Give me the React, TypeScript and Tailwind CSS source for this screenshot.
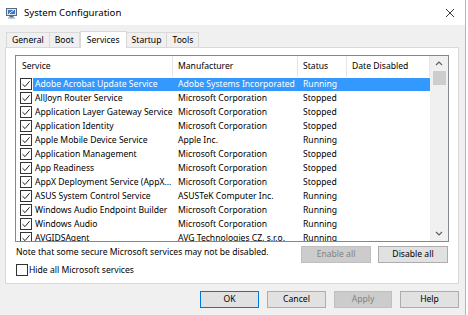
import React from 'react';

const ROWS: [string, string, string][] = [
  ['Adobe Acrobat Update Service', 'Adobe Systems Incorporated', 'Running'],
  ['AllJoyn Router Service', 'Microsoft Corporation', 'Stopped'],
  ['Application Layer Gateway Service', 'Microsoft Corporation', 'Stopped'],
  ['Application Identity', 'Microsoft Corporation', 'Stopped'],
  ['Apple Mobile Device Service', 'Apple Inc.', 'Running'],
  ['Application Management', 'Microsoft Corporation', 'Stopped'],
  ['App Readiness', 'Microsoft Corporation', 'Stopped'],
  ['AppX Deployment Service (AppX...', 'Microsoft Corporation', 'Stopped'],
  ['ASUS System Control Service', 'ASUSTeK Computer Inc.', 'Running'],
  ['Windows Audio Endpoint Builder', 'Microsoft Corporation', 'Running'],
  ['Windows Audio', 'Microsoft Corporation', 'Running'],
  ['AVGIDSAgent', 'AVG Technologies CZ, s.r.o.', 'Running'],
];

const TABS = ['General', 'Boot', 'Services', 'Startup', 'Tools'];

function CheckBox({ checked }: { checked: boolean }) {
  return (
    <div className="w-[12px] h-[12px] border border-[#333333] bg-white flex items-center justify-center shrink-0">
      {checked && (
        <svg width="10" height="10" viewBox="0 0 10 10">
          <path d="M1.5 5.2 L4 7.6 L8.6 2.2" fill="none" stroke="#222" strokeWidth="1" />
        </svg>
      )}
    </div>
  );
}

function Button({ label, disabled, primary, w }: { label: string; disabled?: boolean; primary?: boolean; w: string }) {
  const cls = disabled
    ? 'bg-[#cccccc] border-[#bfbfbf] text-[#838383]'
    : primary
      ? 'bg-[#e1e1e1] border-[#0078d7] text-black'
      : 'bg-[#e1e1e1] border-[#adadad] text-black';
  return (
    <div className={`${w} h-[17px] border flex items-center justify-center text-[8.6px] ${cls}`}>
      {label}
    </div>
  );
}

export default function App() {
  return (
    <div className="w-[468px] h-[315px] bg-white overflow-hidden font-['Segoe_UI','Noto_Sans',sans-serif] text-black">
      <div className="w-[466px] h-[315px] bg-[#f0f0f0] border-r border-[#b4b4b4] flex flex-col">
        {/* Title bar */}
        <div className="h-[25px] bg-white flex items-center pl-[6px] pr-[10px] shrink-0">
          <svg width="12" height="12" viewBox="0 0 12 12" className="shrink-0">
            <rect x="0.5" y="1.5" width="10" height="7" fill="#dfe6ee" stroke="#5a6a7e" />
            <rect x="2" y="3" width="7" height="4" fill="#3a78c8" />
            <path d="M3 7 L5 5 L8 3" stroke="#ffffff" strokeWidth="0.8" fill="none" />
            <rect x="3.5" y="9" width="4" height="1.5" fill="#5a6a7e" />
            <rect x="2" y="10.5" width="7" height="1" fill="#8a98a8" />
          </svg>
          <span className="ml-[6px] text-[9.6px] leading-none">System Configuration</span>
          <svg width="10" height="10" viewBox="0 0 10 10" className="ml-auto">
            <path d="M1 1 L9 9 M9 1 L1 9" stroke="#222" strokeWidth="0.9" />
          </svg>
        </div>

        {/* Tabs */}
        <div className="h-[22px] flex items-end pl-[6px] shrink-0">
          {TABS.map((t) => {
            const active = t === 'Services';
            return active ? (
              <div
                key={t}
                className="h-[17px] px-[6px] -mb-px bg-white border border-b-0 border-[#d9d9d9] flex items-center text-[8.6px] relative z-10"
              >
                {t}
              </div>
            ) : (
              <div
                key={t}
                className="h-[15px] px-[5px] bg-[#f0f0f0] border border-b-0 border-[#d9d9d9] -ml-px first:ml-0 flex items-center text-[8.6px]"
              >
                {t}
              </div>
            );
          })}
        </div>

        {/* Panel */}
        <div className="ml-[5px] w-[454px] h-[237px] bg-white border border-[#d9d9d9] pt-[7px] pl-[9px] flex flex-col shrink-0">
          {/* List */}
          <div className="w-[434px] h-[187px] border border-[#828790] flex">
            <div className="w-[414px] flex flex-col overflow-hidden">
              <div className="h-[21px] flex text-[8.6px] shrink-0">
                <div className="w-[157px] pl-[6px] border-r border-[#e5e5e5] flex items-center">Service</div>
                <div className="w-[125px] pl-[5px] border-r border-[#e5e5e5] flex items-center">Manufacturer</div>
                <div className="w-[49px] pl-[5px] border-r border-[#e5e5e5] flex items-center">Status</div>
                <div className="w-[83px] pl-[5px] border-r border-[#e5e5e5] flex items-center">Date Disabled</div>
              </div>
              {ROWS.map(([svc, mfr, status], i) => {
                const sel = i === 0;
                return (
                  <div key={svc} className="h-[14px] flex items-center shrink-0 text-[8.6px]">
                    <div className="w-[17px] pl-[4px] shrink-0">
                      <CheckBox checked />
                    </div>
                    <div className={`flex h-[13px] items-center ${sel ? 'bg-[#3399ff] text-white' : ''}`}>
                      <div className="w-[140px] pl-[2px] whitespace-nowrap">{svc}</div>
                      <div className="w-[125px] pl-[5px] whitespace-nowrap">{mfr}</div>
                      <div className="w-[49px] pl-[5px] whitespace-nowrap">{status}</div>
                      <div className="w-[83px]" />
                    </div>
                  </div>
                );
              })}
            </div>
            {/* Scrollbar */}
            <div className="w-[18px] bg-[#f0f0f0] flex flex-col items-center">
              <div className="h-[15px] w-full flex items-center justify-center">
                <svg width="8" height="5" viewBox="0 0 8 5">
                  <path d="M1 4 L4 1 L7 4" stroke="#606060" strokeWidth="1.2" fill="none" />
                </svg>
              </div>
              <div className="w-[13px] h-[14px] bg-[#cdcdcd]" />
              <div className="mt-auto h-[15px] w-full flex items-center justify-center">
                <svg width="8" height="5" viewBox="0 0 8 5">
                  <path d="M1 1 L4 4 L7 1" stroke="#606060" strokeWidth="1.2" fill="none" />
                </svg>
              </div>
            </div>
          </div>

          {/* Note + enable/disable */}
          <div className="flex items-start mt-[4px] pr-[10px]">
            <span className="text-[8.6px] leading-none mt-[2px] ml-px">Note that some secure Microsoft services may not be disabled.</span>
            <div className="ml-auto flex gap-[7px]">
              <Button label="Enable all" disabled w="w-[70px]" />
              <Button label="Disable all" w="w-[70px]" />
            </div>
          </div>

          {/* Hide checkbox */}
          <div className="flex items-center gap-[1px] mt-[1px] ml-px">
            <CheckBox checked={false} />
            <span className="text-[8.6px]">Hide all Microsoft services</span>
          </div>
        </div>

        {/* Bottom buttons */}
        <div className="flex justify-end gap-[8px] pr-[6px] mt-[7px]">
          <Button label="OK" primary w="w-[59px]" />
          <Button label="Cancel" w="w-[59px]" />
          <Button label="Apply" disabled w="w-[58px]" />
          <Button label="Help" w="w-[59px]" />
        </div>
      </div>
    </div>
  );
}
